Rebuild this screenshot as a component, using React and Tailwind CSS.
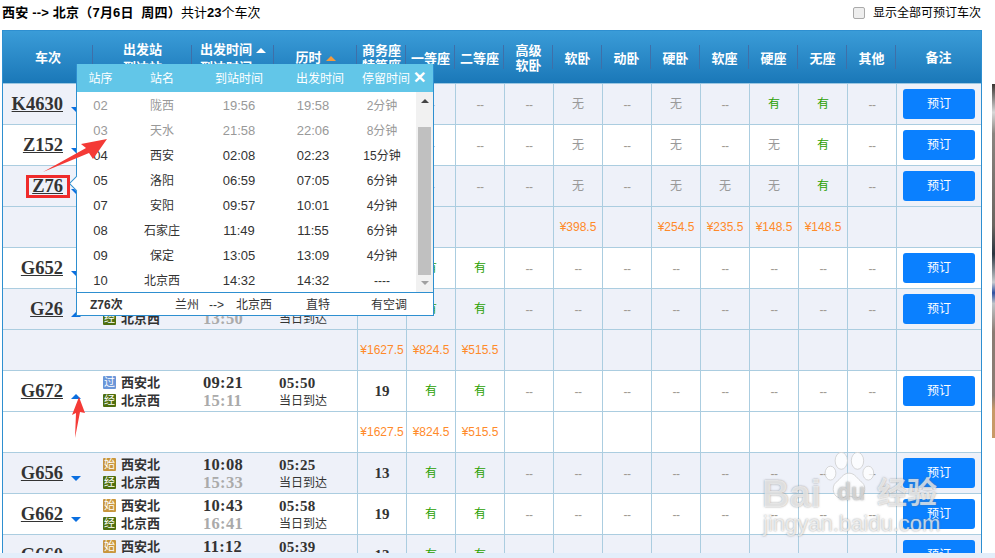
import React from "react";

const D = "--";
const dash8 = [D, D, D, D, D, D, D, D];
const rows = [
  { no: "K4630", alt: true, seats: [D, D, D, D, "无", D, "无", D, "有", "有", D] },
  { no: "Z152", alt: false, seats: [D, D, D, D, "无", D, "无", D, "无", "有", D] },
  { no: "Z76", alt: true, seats: [D, D, D, D, "无", D, "无", "无", "无", "有", D],
    prices: ["", "", "", "", "¥398.5", "", "¥254.5", "¥235.5", "¥148.5", "¥148.5", ""] },
  { no: "G652", alt: false, seats: ["19", "有", "有", ...dash8] },
  { no: "G26", alt: true, up: true, to: "北京西", t2: "13:50", d2: "当日到达", seats: ["19", "有", "有", ...dash8],
    prices: ["¥1627.5", "¥824.5", "¥515.5", "", "", "", "", "", "", "", ""] },
  { no: "G672", alt: false, up: true, icon1: "过", from: "西安北", to: "北京西", t1: "09:21", t2: "15:11", d1: "05:50", d2: "当日到达", seats: ["19", "有", "有", ...dash8],
    prices: ["¥1627.5", "¥824.5", "¥515.5", "", "", "", "", "", "", "", ""] },
  { no: "G656", alt: true, icon1: "始", from: "西安北", to: "北京西", t1: "10:08", t2: "15:33", d1: "05:25", d2: "当日到达", seats: ["13", "有", "有", ...dash8] },
  { no: "G662", alt: false, icon1: "始", from: "西安北", to: "北京西", t1: "10:43", t2: "16:41", d1: "05:58", d2: "当日到达", seats: ["19", "有", "有", ...dash8] },
  { no: "G660", alt: true, icon1: "始", from: "西安北", to: "北京西", t1: "11:12", t2: "16:51", d1: "05:39", d2: "当日到达", seats: ["13", "有", "有", ...dash8] },
];

const stops = [
  ["02", "陇西", "19:56", "19:58", "2分钟", true],
  ["03", "天水", "21:58", "22:06", "8分钟", true],
  ["04", "西安", "02:08", "02:23", "15分钟"],
  ["05", "洛阳", "06:59", "07:05", "6分钟"],
  ["07", "安阳", "09:57", "10:01", "4分钟"],
  ["08", "石家庄", "11:49", "11:55", "6分钟"],
  ["09", "保定", "13:05", "13:09", "4分钟"],
  ["10", "北京西", "14:32", "14:32", "----"],
];

const heads = ["商务座\n特等座", "一等座", "二等座", "高级\n软卧", "软卧", "动卧", "硬卧", "软座", "硬座", "无座", "其他"];

const gridCols = "grid grid-cols-[90px_99px_82px_83px_repeat(11,49px)_85px]";

function Badge({ k }) {
  const color = k === "过" ? "bg-[#6a96d8]" : k === "始" ? "bg-[#c8963c]" : "bg-[#4f6f0f]";
  return (
    <span className={`${color} mr-[5px] flex h-[13px] w-[13px] shrink-0 items-center justify-center rounded-[1px] text-[11px] font-normal leading-none text-white`}>
      {k}
    </span>
  );
}

function Seat({ v }) {
  let cls = "text-[#999] text-[12px]";
  if (v === "有") cls = "text-[#2aa000] text-[12px]";
  if (v === "--") cls = "text-[#a09a94] text-[12px] tracking-[-0.5px] pt-[1px]";
  if (/^\d+$/.test(v)) cls = "text-[#333] text-[15px] font-bold font-['Liberation_Serif',serif]";
  return (
    <div className="flex items-center justify-center border-l border-[#abcde0]">
      <span className={cls}>{v}</span>
    </div>
  );
}

function TrainRow({ r }) {
  const bg = r.alt ? "bg-[#eef1f9]" : "bg-white";
  return (
    <>
      <div className={`${gridCols} ${bg} h-[41px] border-b border-[#abcde0]`}>
        <div className="flex items-center justify-end">
          <a className="font-['Liberation_Serif',serif] text-[18.5px] font-bold leading-none text-[#333] underline">{r.no}</a>
          <span className={`ml-[8px] mr-[12px] mb-[12px] h-0 w-0 self-end border-x-[5px] border-x-transparent ${r.up ? "border-b-[5px] border-b-[#0a6fe0]" : "border-t-[5px] border-t-[#0a6fe0]"}`} />
        </div>
        <div className="flex flex-col justify-center pl-[10px] pt-[1px] text-[13px] font-bold leading-[18px] text-[#333]">
          <div className="flex h-[18px] items-center">
            {r.icon1 && <Badge k={r.icon1} />}
            {r.icon1 && <span>{r.from}</span>}
          </div>
          <div className="flex h-[18px] items-center">
            {r.to && <Badge k="经" />}
            <span>{r.to}</span>
          </div>
        </div>
        <div className="flex flex-col justify-center pl-[11px] pt-[1px] font-['Liberation_Serif',serif] text-[16.5px] font-bold leading-[18px] tracking-[0.3px]">
          <div className="h-[18px] text-[#333]">{r.t1}</div>
          <div className="h-[18px] text-[#aaa]">{r.t2}</div>
        </div>
        <div className="flex flex-col justify-center pl-[5px] pt-[1px] leading-[18px] text-[#333]">
          <div className="h-[18px] font-['Liberation_Serif',serif] text-[15px] font-bold tracking-[0.3px]">{r.d1}</div>
          <div className="h-[18px] text-[12px]">{r.d2}</div>
        </div>
        {r.seats.map((v, i) => (
          <Seat key={i} v={v} />
        ))}
        <div className="flex items-center justify-center border-l border-[#abcde0]">
          <button className="h-[30px] w-[72px] rounded-[3px] bg-[#0a80ff] text-[12px] text-white">预订</button>
        </div>
      </div>
      {r.prices && (
        <div className={`${gridCols} ${bg} h-[41px] border-b border-[#abcde0]`}>
          <div className="col-span-4" />
          {r.prices.map((p, i) => (
            <div key={i} className="flex items-center justify-center border-l border-[#abcde0] text-[12px] text-[#ff8a2a]">
              {p}
            </div>
          ))}
          <div className="border-l border-[#abcde0]" />
        </div>
      )}
    </>
  );
}

function Sep() {
  return <span className="absolute right-0 top-[14px] h-[24px] w-px bg-[#3f6fa8]" />;
}

function Popup() {
  return (
    <div className="absolute left-[76px] top-[64px] z-10 w-[358px] border border-t-0 border-[#2e8fd0] bg-white text-[12px] text-[#333]">
      <span className="absolute -left-[6px] top-[114px] h-[11px] w-[11px] rotate-45 border-b border-l border-[#2e8fd0] bg-white" />
      <div className="relative flex h-[28px] items-center whitespace-nowrap bg-[#62c6e8] pt-[1px] text-white">
        <span className="w-[47px] text-center">站序</span>
        <span className="w-[76px] text-center">站名</span>
        <span className="w-[78px] text-center">到站时间</span>
        <span className="w-[84px] text-center">出发时间</span>
        <span className="w-[42px] text-center">停留时间</span>
        <span className="absolute right-[7px] top-[6px] text-[16px] font-bold leading-none">✕</span>
      </div>
      <div className="flex h-[201px] border-b border-[#2e8fd0]">
        <div className="w-[339px] pt-[1px]">
          {stops.map((s) => (
            <div key={s[0]} className={`flex h-[25px] items-center ${s[5] ? "text-[#999]" : "text-[#333]"}`}>
              <span className="w-[47px] text-center text-[13px]">{s[0]}</span>
              <span className="w-[76px] text-center">{s[1]}</span>
              <span className="w-[78px] text-center text-[13px]">{s[2]}</span>
              <span className="w-[70px] text-center text-[13px]">{s[3]}</span>
              <span className="w-[68px] text-center">{s[4]}</span>
            </div>
          ))}
        </div>
        <div className="flex w-[17px] flex-col items-center bg-[#f1f1f1]">
          <span className="mt-[7px] h-0 w-0 border-x-[4px] border-b-[4px] border-x-transparent border-b-[#444]" />
          <span className="mt-[24px] h-[148px] w-[13px] bg-[#c0c0c0]" />
          <span className="mt-[6px] h-0 w-0 border-x-[4px] border-t-[4px] border-x-transparent border-t-[#a0a0a0]" />
        </div>
      </div>
      <div className="flex h-[22px] items-center whitespace-nowrap pt-[1px]">
        <span className="ml-[13px] w-[85px] font-bold">Z76次</span>
        <span className="w-[34px]">兰州</span>
        <span className="w-[27px]">--&gt;</span>
        <span className="w-[70px]">北京西</span>
        <span className="w-[65px]">直特</span>
        <span>有空调</span>
      </div>
    </div>
  );
}

function Watermark() {
  return (
    <div className="pointer-events-none absolute left-[762px] top-[450px] z-20 h-[90px] w-[190px] text-white/70 [text-shadow:0_0_2px_rgba(110,110,110,0.7)]">
      <svg className="absolute left-[60px] top-[2px]" width="54" height="50" viewBox="0 0 70 64" fill="#fff" fillOpacity="0.75">
        <ellipse cx="11" cy="27" rx="7" ry="9" stroke="#ccc" />
        <ellipse cx="25" cy="11" rx="8" ry="11" stroke="#ccc" />
        <ellipse cx="46" cy="11" rx="8" ry="11" stroke="#ccc" />
        <ellipse cx="60" cy="27" rx="7" ry="9" stroke="#ccc" />
        <path d="M35 27c8 0 11 8 17 12 7 6 3 22-8 20-4-1-6-2-9-2s-5 1-9 2c-11 2-15-14-8-20 6-4 9-12 17-12z" stroke="#ccc" />
      </svg>
      <span className="absolute left-0 top-[25px] font-['Liberation_Sans',sans-serif] text-[38px] font-bold leading-none">Bai</span>
      <span className="absolute left-[75px] top-[31px] font-['Liberation_Sans',sans-serif] text-[23px] font-bold leading-none text-[#ddd]/80">du</span>
      <span className="absolute left-[115px] top-[28px] text-[30px] font-bold leading-none">经验</span>
      <span className="absolute left-[1px] top-[63px] font-['Liberation_Sans',sans-serif] text-[22px] leading-none">jingyan.baidu.com</span>
    </div>
  );
}

export default function App() {
  return (
    <div className="relative h-[558px] w-[995px] overflow-hidden bg-white font-['Liberation_Sans','Noto_Sans_CJK_SC',sans-serif] text-[#333]">
      <div className="flex h-[30px] items-start pt-[5px] pl-[2px] text-[13px] leading-[16px] text-black">
        <span className="font-bold tracking-[0.2px]">西安 --&gt; 北京（7月6日&nbsp;&nbsp;周四）</span>
        <span>共计<b>23</b>个车次</span>
        <span className="ml-auto mt-[2px] h-[12px] w-[12px] rounded-[2px] border border-[#aaa] bg-[#eee]" />
        <span className="ml-[8px] mr-[14px] text-[12px]">显示全部可预订车次</span>
      </div>

      <div className="flex">
        <div className="relative ml-[2px] h-[523px] w-[980px] overflow-hidden border-x border-t border-[#2e8fd0]">
          <div className={`${gridCols} h-[53px] border-b border-[#9cc7e2] bg-gradient-to-b from-[#3a9cd8] to-[#1a78b8] text-[13px] font-bold leading-[18px] text-white`}>
            <div className="relative flex items-center justify-center pt-[2px]">车次<Sep /></div>
            <div className="relative flex h-[52px] flex-col items-center justify-center overflow-hidden pt-[4px]">
              <span>出发站</span><span>到达站</span><Sep />
            </div>
            <div className="relative flex h-[52px] flex-col items-center justify-center overflow-hidden pt-[4px]">
              <span className="flex items-center">出发时间<i className="ml-[4px] h-0 w-0 border-x-[5px] border-b-[5px] border-x-transparent border-b-white" /></span>
              <span className="flex items-center">到达时间<i className="ml-[4px] h-0 w-0 border-x-[5px] border-b-[5px] border-x-transparent border-b-white" /></span>
              <Sep />
            </div>
            <div className="relative flex items-center justify-center pt-[2px]">
              历时<i className="ml-[4px] h-0 w-0 border-x-[5px] border-b-[5px] border-x-transparent border-b-[#f59a3c]" /><Sep />
            </div>
            {heads.map((h) => (
              <div key={h} className="relative flex items-center justify-center whitespace-pre-line pt-[2px] text-center leading-[15px]">
                {h}<Sep />
              </div>
            ))}
            <div className="flex items-center justify-center pt-[2px]">备注</div>
          </div>
          {rows.map((r) => (
            <TrainRow key={r.no} r={r} />
          ))}
        </div>
        <div className="ml-[10px] mt-[54px] h-[354px] w-[3px] bg-[linear-gradient(to_bottom,#3a3532_0%,#d8d8d8_8%,#8a8580_14%,#6a6560_40%,#2a3540_48%,#c8ccd0_56%,#3050a0_59%,#c0c4c8_62%,#8a7c74_70%,#8a7c74_88%,#c89a68_92%,#c89a68_100%)]" />
      </div>

      <div className="h-[5px] bg-[#e3eefa]" />

      <Popup />

      <span className="absolute left-[26px] top-[175px] z-20 h-[23px] w-[44px] border-[3px] border-[#ef2b2b]" />
      <svg className="absolute left-[40px] top-[135px] z-20" width="70" height="40" viewBox="0 0 70 40">
        <path d="M3 37 L46 13 L41 9 L67 4 L53 24 L49 18 Z" fill="#f43a36" />
      </svg>
      <svg className="absolute left-[70px] top-[396px] z-20" width="16" height="44" viewBox="0 0 16 44">
        <path d="M5 42 L6 17 L2 19 L9 1 L15 17 L10 16 Z" fill="#f43a36" />
      </svg>

      <Watermark />
    </div>
  );
}
